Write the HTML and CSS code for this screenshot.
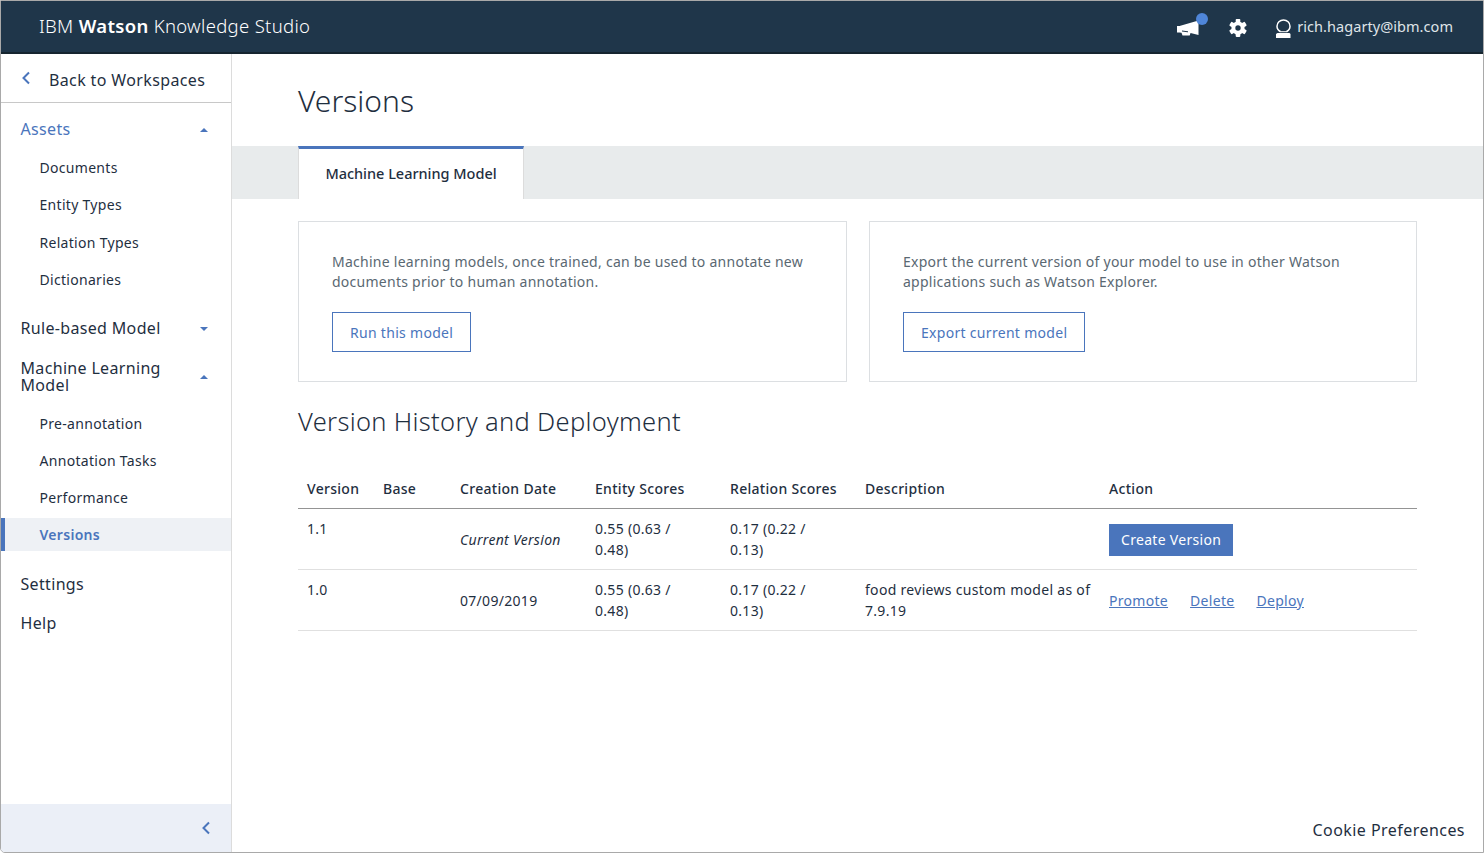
FILE: index.html
```html
<!DOCTYPE html>
<html lang="en">
<head>
<meta charset="utf-8">
<title>Versions - IBM Watson Knowledge Studio</title>
<link rel="stylesheet" href="styles.css">
</head>
<body>
<div class="frame">
  <header class="topbar">
    <div class="brand">IBM <b>Watson</b> Knowledge Studio</div>
    <div class="top-actions">
      <span class="megaphone">
        <svg width="22" height="17" viewBox="0 0 22 17"><path d="M0 7h2.500L21.500 1.500V16L13.500 14l-.8 2.500H5.500L4.500 13.800 2.500 13.500H0z" fill="#fff"/><path d="M5 12l6 .8" stroke="#1f364a" stroke-width="1"/></svg>
        <i class="dot"></i>
      </span>
      <svg class="gear" width="18" height="18" viewBox="-9 -9 18 18">
        <g fill="#fff">
          <circle r="6.600"/>
          <rect x="-2.300" y="-8.900" width="4.600" height="17.800" rx=".8"/>
          <rect x="-2.300" y="-8.900" width="4.600" height="17.800" rx=".8" transform="rotate(60)"/>
          <rect x="-2.300" y="-8.900" width="4.600" height="17.800" rx=".8" transform="rotate(120)"/>
        </g>
        <circle r="2.700" fill="#1f364a"/>
      </svg>
      <div class="user">
        <svg width="15" height="19" viewBox="0 0 15 19"><path d="M4.500 12.500C2.300 11.500 1 9.500 1 7.200 1 3.700 3.900 1 7.500 1S14 3.700 14 7.200c0 2.300-1.300 4.300-3.500 5.300" fill="none" stroke="#fff" stroke-width="1.500"/><path d="M3.500 12.700h8" stroke="#fff" stroke-width="1"/><path d="M1.500 14h12l1 1v4H0v-4z" fill="#fff"/></svg>
        <span>rich.hagarty@ibm.com</span>
      </div>
    </div>
  </header>
  <div class="body">
    <aside class="sidebar">
      <a class="back">
        <svg width="10" height="14" viewBox="0 0 10 14"><path d="M8 1.500L2.500 7 8 12.500" fill="none" stroke="#4a75bc" stroke-width="2"/></svg>
        <span>Back to Workspaces</span>
      </a>
      <nav class="nav">
        <div class="group open"><span>Assets</span><i class="caret up"></i></div>
        <ul class="sub first">
          <li>Documents</li><li>Entity Types</li><li>Relation Types</li><li>Dictionaries</li>
        </ul>
        <div class="group rule"><span>Rule-based Model</span><i class="caret down"></i></div>
        <div class="group ml"><span>Machine Learning Model</span><i class="caret up"></i></div>
        <ul class="sub second">
          <li>Pre-annotation</li><li>Annotation Tasks</li><li>Performance</li><li class="active">Versions</li>
        </ul>
        <div class="group settings"><span>Settings</span></div>
        <div class="group help"><span>Help</span></div>
      </nav>
      <div class="collapse">
        <svg width="10" height="14" viewBox="0 0 10 14"><path d="M8 1.500L2.500 7 8 12.500" fill="none" stroke="#4a75bc" stroke-width="2"/></svg>
      </div>
    </aside>
    <main class="main">
      <h1 class="title">Versions</h1>
      <div class="tabbar"><div class="tab">Machine Learning Model</div></div>
      <section class="cards">
        <div class="card">
          <p>Machine learning models, once trained, can be used to annotate new documents prior to human annotation.</p>
          <a class="btn">Run this model</a>
        </div>
        <div class="card">
          <p>Export the current version of your model to use in other Watson applications such as Watson Explorer.</p>
          <a class="btn">Export current model</a>
        </div>
      </section>
      <h2 class="subtitle">Version History and Deployment</h2>
      <table class="versions">
        <colgroup>
          <col class="c1"><col class="c2"><col class="c3"><col class="c4"><col class="c5"><col class="c6"><col class="c7">
        </colgroup>
        <thead>
          <tr><th>Version</th><th>Base</th><th>Creation Date</th><th>Entity Scores</th><th>Relation Scores</th><th>Description</th><th>Action</th></tr>
        </thead>
        <tbody>
          <tr>
            <td>1.1</td><td></td><td class="mid"><em>Current Version</em></td>
            <td class="score">0.55 (0.63 / 0.48)</td><td class="score">0.17 (0.22 / 0.13)</td><td></td>
            <td class="mid"><a class="primary">Create Version</a></td>
          </tr>
          <tr>
            <td>1.0</td><td></td><td class="mid">07/09/2019</td>
            <td class="score">0.55 (0.63 / 0.48)</td><td class="score">0.17 (0.22 / 0.13)</td><td>food reviews custom model as of 7.9.19</td>
            <td class="mid links"><a>Promote</a><a>Delete</a><a>Deploy</a></td>
          </tr>
        </tbody>
      </table>
      <a class="cookie">Cookie Preferences</a>
    </main>
  </div>
</div>
</body>
</html>
```
FILE: styles.css
```css
* { box-sizing: border-box; }
html, body { margin: 0; height: 100%; overflow: hidden; background: #fff; }
body { font-family: "Noto Sans", "Open Sans", sans-serif; color: #1f2f3f; }
.frame { position: relative; height: 853px; display: flex; flex-direction: column; overflow: hidden; border: 1px solid #a9a9a9; border-bottom-left-radius: 5px; }
.frame::after { content: ""; position: absolute; top: 0; bottom: 0; right: -1px; width: 1px; background: linear-gradient(to bottom, #a9a9a9 306px, #1a1a1a 306px, #1a1a1a 326px, #777 326px, #777 639px, #a9a9a9 639px, #a9a9a9 659px, #1f364a 659px, #1f364a 679px, #a9a9a9 679px); }
.topbar { height: 53px; flex: none; display: flex; align-items: center; justify-content: space-between; background: #1f364a; border-bottom: 2px solid #16252f; padding: 0 30px 0 38px; color: #fff; }
.brand { font-size: 18.500px; font-weight: 300; letter-spacing: .32px; margin-bottom: 2px; }
.brand b { font-weight: 600; }
.top-actions { display: flex; align-items: center; }
.megaphone { position: relative; display: block; width: 22px; height: 17px; margin: 2px 30px 0 0; }
.megaphone svg { display: block; }
.dot { position: absolute; top: -6px; left: 19px; width: 12px; height: 12px; border-radius: 50%; background: #4f86d9; }
.gear { display: block; margin: 2px 29px 0 0; }
.user { display: flex; align-items: center; gap: 6px; font-size: 14.500px; letter-spacing: .05px; color: #dfe4e8; }
.user svg { display: block; margin-top: 3px; }
.user span { margin-bottom: 1px; }
.body { flex: 1; display: flex; min-height: 0; }
.sidebar { width: 231px; flex: none; display: flex; flex-direction: column; border-right: 1px solid #dcdcdc; }
.back { height: 49px; flex: none; display: flex; align-items: center; gap: 18px; padding: 4px 0 0 20px; border-bottom: 1px solid #c8c8c8; font-size: 16px; letter-spacing: .37px; }
.back svg { display: block; margin-top: -4px; }
.nav { flex: 1; padding-top: 9px; }
.group { display: flex; align-items: center; justify-content: space-between; padding: 0 23px 0 19.500px; font-size: 16px; letter-spacing: .33px; line-height: 17px; height: 35px; }
.group.open { color: #4a75bc; }
.group.rule { margin-top: 13px; }
.group.ml { height: 40px; margin-top: 11px; }
.group.ml span { width: 150px; }
.group.settings { margin-top: 16px; }
.group.help { margin-top: 4px; }
.caret { display: block; width: 0; height: 0; border-left: 4px solid transparent; border-right: 4px solid transparent; }
.caret.up { border-bottom: 4px solid #4a75bc; }
.caret.down { border-top: 4px solid #4a75bc; }
.sub { list-style: none; margin: 0; padding: 2px 0 0; font-size: 14px; letter-spacing: .3px; }
.sub.second { padding-top: 8px; }
.sub li { height: 37.300px; display: flex; align-items: center; padding-left: 38.500px; }
.sub.second li { height: 37px; }
.sub li.active { height: 33px; margin-top: 2px; color: #4a75bc; font-weight: 600; background: #eef1f5; border-left: 4px solid #4a75bc; padding-left: 34.500px; }
.collapse { height: 48px; flex: none; display: flex; align-items: center; justify-content: flex-end; padding-right: 20px; background: #ebeff7; }
.collapse svg { display: block; }
.main { flex: 1; min-width: 0; position: relative; }
.title { margin: 0; height: 92px; padding: 27px 0 0 66px; font-size: 30px; line-height: 40px; font-weight: 300; }
.tabbar { height: 53px; background: #e8ebec; padding-left: 66px; }
.tab { width: 226px; height: 53px; background: #fff; border-top: 3px solid #4a75bc; border-right: 1px solid #dcdcdc; border-left: 1px solid #dcdcdc; display: flex; align-items: center; justify-content: center; padding-bottom: 2px; font-size: 14.500px; font-weight: 500; letter-spacing: -.02px; }
.cards { display: grid; grid-template-columns: 549px 548px; gap: 22px; margin: 22px 0 0 66px; }
.card { height: 161px; border: 1px solid #dcdfe2; padding: 30px 33px 0; }
.card p { margin: 0 0 20px; font-size: 14px; line-height: 20px; letter-spacing: .26px; color: #5a6872; }
.btn { display: inline-block; height: 40px; line-height: 40px; padding: 0 17px; border: 1px solid #4a75bc; color: #4a75bc; font-size: 14px; letter-spacing: .3px; }
.subtitle { margin: 22px 66px 0; font-size: 25.500px; line-height: 34px; font-weight: 300; letter-spacing: .32px; }
.versions { width: 1119px; margin: 31px 0 0 66px; border-collapse: collapse; table-layout: fixed; font-size: 14px; letter-spacing: .3px; line-height: 21px; }
.c1 { width: 76px; } .c2 { width: 77px; } .c3 { width: 135px; } .c4 { width: 135px; } .c5 { width: 135px; } .c6 { width: 244px; } .c7 { width: 317px; }
.versions th { text-align: left; font-weight: 500; height: 39px; padding: 0 9px; border-bottom: 1px solid #949494; }
.versions td { vertical-align: top; padding: 9px; height: 61px; border-bottom: 1px solid #e0e0e0; }
.versions td.score { padding-right: 30px; }
.versions td.mid { vertical-align: middle; padding-top: 10px; padding-bottom: 8px; }
.versions em { font-style: italic; }
.primary { display: inline-block; height: 32px; line-height: 32px; padding: 0 12px; background: #4a75bc; color: #fff; }
.links a { color: #4a75bc; text-decoration: underline; margin-right: 22px; }
.cookie { position: absolute; right: 18px; bottom: 11px; font-size: 16px; letter-spacing: .45px; }
```
